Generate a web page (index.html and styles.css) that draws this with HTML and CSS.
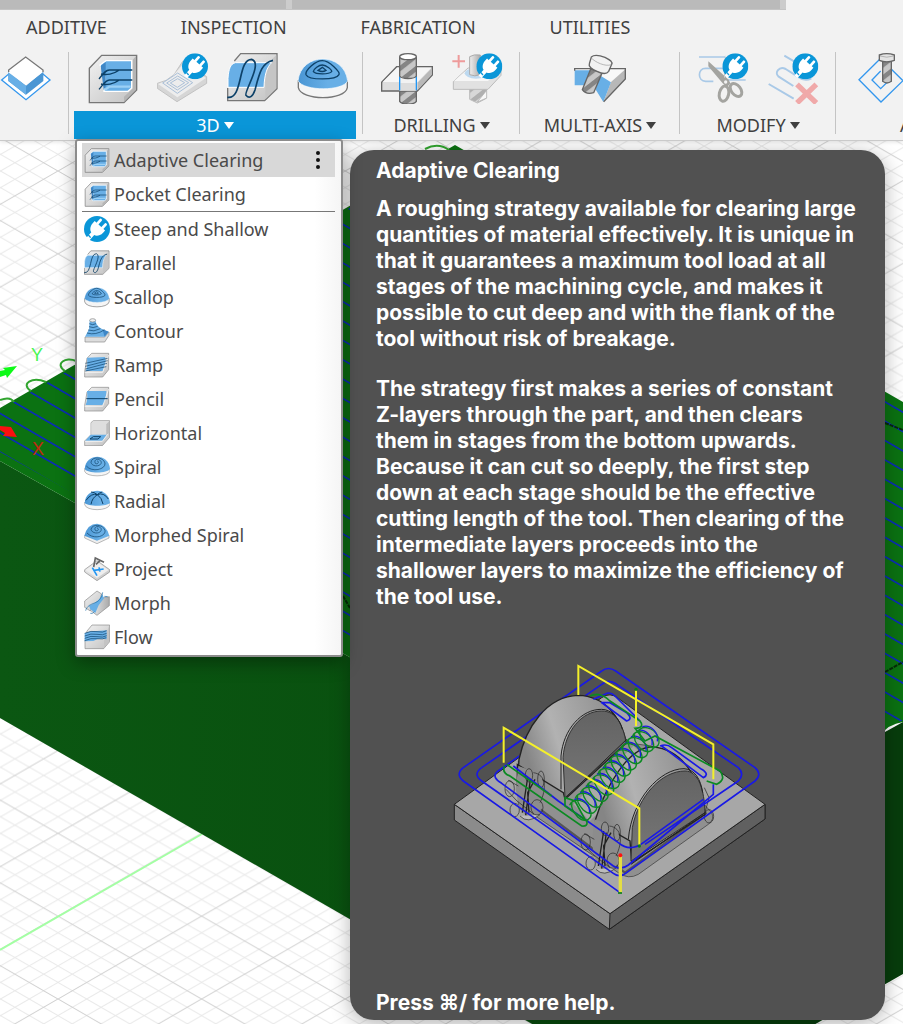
FILE: index.html
```html
<!DOCTYPE html>
<html lang="en">
<head>
<meta charset="utf-8">
<title>Manufacture workspace</title>
<link rel="stylesheet" href="styles.css">
</head>
<body>
<svg class="sprite" aria-hidden="true">
  <defs>
    <linearGradient id="metal" x1="0" y1="0" x2="1" y2="1"><stop offset="0" stop-color="#f2f2f2"/><stop offset="1" stop-color="#c2c2c2"/></linearGradient>
    <linearGradient id="shade" x1="0" y1="0" x2="1" y2="0"><stop offset="0" stop-color="#eee"/><stop offset="1" stop-color="#aaa"/></linearGradient>
    <linearGradient id="dome" x1="0" y1="0" x2="1" y2="0"><stop offset="0" stop-color="#4a96d4"/><stop offset=".6" stop-color="#68afe6"/><stop offset="1" stop-color="#68afe6"/></linearGradient>
    <symbol id="plug" viewBox="0 0 78 78">
      <circle cx="39" cy="39" r="39" fill="#0a96d8"/>
      <g transform="translate(39 39) rotate(42)" fill="#fff">
        <rect x="-14" y="-31" width="8" height="22" rx="3"/><rect x="6" y="-31" width="8" height="22" rx="3"/>
        <path d="M-21-13H21V-4C21 10 12 18 6 19V42H-6V19C-12 18-21 10-21-4Z"/>
      </g>
      <path d="M13 57l7 8" stroke="#0a96d8" stroke-width="4"/>
    </symbol>
    <symbol id="adaptive" viewBox="261 156 156 156">
      <path d="M268 205L305 166H410V270L372 308H268Z" fill="url(#metal)" stroke="#777" stroke-width="4"/>
      <path d="M408 168V269L372 306V290L398 266V180Z" fill="#b5b5b5"/>
      <path d="M300 195L318 182H395V264L384 274H312L316 230Z" fill="#68afe6" stroke="#fff" stroke-width="4"/>
      <path d="M302 198L317 186V260L311 270Z" fill="#3f87c6"/>
      <path d="M314 270L328 260H392" fill="none" stroke="#9bd0f5" stroke-width="7"/>
      <path d="M297 237C310 221 315 211 328 210H397M303 222C318 226 342 222 357 211M297 268C310 254 315 241 328 240H397M303 252C318 256 342 252 357 241" fill="none" stroke="#0d4168" stroke-width="4"/>
    </symbol>
    <symbol id="parallel" viewBox="681 156 156 156">
      <path d="M683 264V302H794L831 266V161H722L703 183" fill="url(#metal)" stroke="#777" stroke-width="4"/>
      <path d="M796 262C794 215 800 190 829 165V265L796 298Z" fill="#c5c5c5"/>
      <path d="M684 262V235C686 205 692 192 706 188H815C801 200 793 225 792 262Z" fill="#68afe6" stroke="#fff" stroke-width="3"/>
      <path d="M682 292C730 300 712 178 755 178C790 188 730 278 738 286C748 298 758 290 765 270C778 220 785 188 819 181" fill="none" stroke="#0d4168" stroke-width="5"/>
    </symbol>
    <symbol id="scallop" viewBox="888 156 156 156">
      <path d="M892 240V263C900 303 1032 303 1039 263V240" fill="#f5f5f5" stroke="#777" stroke-width="4"/>
      <path d="M891 243C900 155 1030 155 1040 243C1025 274 910 274 891 243Z" fill="url(#dome)" stroke="#fff" stroke-width="2"/>
      <path d="M964 182C986 182 1018 217 1014 224C1005 241 923 241 915 224C912 211 943 182 964 182ZM964 195C976 195 994 210 992 215C984 224 944 224 937 215C938 207 954 195 964 195ZM964 202L975 211Q964 218 951 211Z" fill="none" stroke="#0d4168" stroke-width="4"/>
    </symbol>
    <pattern id="threads" width="24" height="30" patternUnits="userSpaceOnUse" patternTransform="rotate(-38)"><rect width="24" height="30" fill="#c8c8c8"/><rect width="24" height="14" fill="#858585"/></pattern>
  </defs>
</svg>

<header class="ribbon">
  <div class="window-strip"><span></span><span></span></div>
  <nav class="tabs" aria-label="Workspace tabs">
    <a href="#additive">ADDITIVE</a><a href="#inspection">INSPECTION</a><a href="#fabrication">FABRICATION</a><a href="#utilities">UTILITIES</a>
  </nav>
  <div class="groups">
    <section class="group group-setup">
      <div class="tools"><button aria-label="Setup"><svg viewBox="0 156 156 156">
        <path d="M5 240L25 223L77 275L130 223L150 240L78 299Z" fill="#fff" stroke="#3497ee" stroke-width="4"/>
        <path d="M25 215V243L78 284L130 243V214L78 257Z" fill="#4a96d4"/><path d="M25 215V243L78 284V257Z" fill="#68afe6"/>
        <path d="M25 217V211L77 171L130 211V215L78 256Z" fill="#fff"/><path d="M26 216V210L77 171L129 210V216" fill="none" stroke="#777" stroke-width="4"/>
      </svg></button></div>
    </section>
    <section class="group group-3d">
      <div class="tools">
        <button aria-label="Adaptive clearing tool"><svg><use href="#adaptive"/></svg></button>
        <button aria-label="Steep and shallow tool"><svg viewBox="471 156 156 156">
          <path d="M472 250Q500 245 522 224L548 184L620 230V250L531 305L472 265Z" fill="#d6d6d6" stroke="#c2c2c2" stroke-width="3"/>
          <path d="M474 252Q505 244 525 220L552 190L618 234L532 292Z" fill="#ededed"/>
          <path d="M488 249L533 219L578 248L532 280ZM500 249L533 228L566 248L532 270ZM511 249L533 236L554 248L532 262Z" fill="none" stroke="#abc0d8" stroke-width="3"/>
          <use href="#plug" x="546" y="160" width="78" height="78"/>
        </svg></button>
        <button aria-label="Parallel tool"><svg><use href="#parallel"/></svg></button>
        <button aria-label="Scallop tool"><svg><use href="#scallop"/></svg></button>
      </div>
      <button class="group-label active" aria-haspopup="menu" aria-expanded="true">3D<i></i></button>
      <div class="menu" role="menu" aria-label="3D">
        <button class="item selected" role="menuitem"><svg><use href="#adaptive"/></svg>Adaptive Clearing<span class="more">
          <svg viewBox="0 0 6 20"><circle cx="3" cy="3" r="2"/><circle cx="3" cy="10" r="2"/><circle cx="3" cy="17" r="2"/></svg></span></button>
        <button class="item" role="menuitem"><svg><use href="#adaptive"/></svg>Pocket Clearing</button>
        <hr>
        <button class="item" role="menuitem"><svg><use href="#plug"/></svg>Steep and Shallow</button>
        <button class="item" role="menuitem"><svg><use href="#parallel"/></svg>Parallel</button>
        <button class="item" role="menuitem"><svg><use href="#scallop"/></svg>Scallop</button>
        <button class="item" role="menuitem"><svg viewBox="41 23 78 78">
          <path d="M44 80L103 80L116 65V75L103 95H44Z" fill="#ddd" stroke="#888" stroke-width="2"/>
          <path d="M44 79L56 57L58 30Q66 24 75 28C78 48 88 54 115 64L103 79Z" fill="#68afe6"/><path d="M103 79L115 64L96 57Z" fill="#3f87c6"/>
          <ellipse cx="67" cy="30" rx="9" ry="5" fill="#eee" stroke="#888" stroke-width="2"/>
          <path d="M57 40Q67 46 77 40M56 49Q68 55 82 48M53 59Q70 66 90 55M50 68Q76 76 103 58" fill="none" stroke="#0d4168" stroke-width="2"/>
        </svg>Contour</button>
        <button class="item" role="menuitem"><svg viewBox="41 121 78 78">
          <path d="M43 196V179L50 140L64 125H115V174L97 196Z" fill="url(#metal)" stroke="#888" stroke-width="2"/>
          <path d="M46 178Q53 168 50 138L104 136Q110 150 97 178Z" fill="#68afe6"/><path d="M43 182H97L115 130" fill="none" stroke="#fff" stroke-width="2"/>
          <path d="M45 155L112 140M45 164L112 147M45 172L110 155M45 178L108 165" stroke="#0d4168" stroke-width="2"/>
        </svg>Ramp</button>
        <button class="item" role="menuitem"><svg viewBox="41 223 78 78">
          <path d="M43 298V281L50 242L64 227H115V276L97 298Z" fill="url(#metal)" stroke="#888" stroke-width="2"/>
          <path d="M46 280Q53 264 50 238H108Q108 265 96 280Z" fill="#68afe6"/><path d="M43 284H97L115 232" fill="none" stroke="#fff" stroke-width="2"/><path d="M48 261H112" stroke="#0d4168" stroke-width="3"/>
        </svg>Pencil</button>
        <button class="item" role="menuitem"><svg viewBox="41 327 78 78">
          <path d="M43 404V390L62 371V335L69 329H118V379L96 404Z" fill="url(#metal)" stroke="#888" stroke-width="2"/>
          <path d="M63 337L69 330H117L108 340V371H63Z" fill="#dedede"/><path d="M108 340V371L117 365V331Z" fill="#bdbdbd"/>
          <path d="M45 389L61 371H109L96 389Z" fill="#68afe6"/><path d="M44 391H96L112 370" fill="none" stroke="#fff" stroke-width="2"/><path d="M59 384L69 377H91L83 384Z" fill="none" stroke="#0d4168" stroke-width="3"/>
        </svg>Horizontal</button>
        <button class="item" role="menuitem"><svg viewBox="41 430 78 78">
          <path d="M43 473V482C48 500 112 500 119 482V473" fill="#f5f5f5" stroke="#999" stroke-width="2"/><path d="M43 474C47 426 115 426 119 474C112 489 50 489 43 474Z" fill="url(#dome)"/>
          <path d="M48 466C64 486 107 477 104 457C98 437 63 437 62 455C66 472 98 467 92 452C85 441 69 446 75 458C83 463 88 453 80 450" fill="none" stroke="#0d4168" stroke-width="2"/>
        </svg>Spiral</button>
        <button class="item" role="menuitem"><svg viewBox="41 22 78 78">
          <path d="M43 64V72C48 92 112 92 119 72V64" fill="#f5f5f5" stroke="#999" stroke-width="2"/><path d="M43 66C47 18 115 18 119 66C112 78 50 78 43 66Z" fill="url(#dome)"/>
          <path d="M47 59Q64 36 81 42Q100 34 114 55M81 42Q86 36 96 34M81 42Q72 34 62 34M81 42Q65 52 62 71M81 42Q95 52 98 70" fill="none" stroke="#0d4168" stroke-width="3"/>
        </svg>Radial</button>
        <button class="item" role="menuitem"><svg viewBox="41 125 78 78">
          <path d="M43 165V173L80 190L116 173V165" fill="#eee" stroke="#999" stroke-width="2"/><path d="M42 166Q52 130 80 130Q108 132 117 166L80 181Z" fill="url(#dome)"/>
          <path d="M50 158C68 178 107 170 104 150C98 131 65 130 62 147C66 164 98 160 92 144C85 134 69 139 75 150C83 155 88 145 80 143" fill="none" stroke="#0d4168" stroke-width="2"/>
        </svg>Morphed Spiral</button>
        <button class="item" role="menuitem"><svg viewBox="41 225 78 78">
          <path d="M43 266L80 239L118 266V273L80 299L43 273Z" fill="url(#metal)" stroke="#888" stroke-width="2"/><path d="M46 267L80 243L115 267L80 291Z" fill="#eee"/>
          <path d="M70 258L75 231L101 244M77 250L89 239" fill="none" stroke="#666" stroke-width="5"/><path d="M66 260L80 284M71 268L100 264M86 259L89 272" fill="none" stroke="#2196f3" stroke-width="5"/>
        </svg>Project</button>
        <button class="item" role="menuitem"><svg viewBox="41 325 78 78">
          <path d="M43 358L80 328L94 337L88 356L60 388L43 377Z" fill="url(#metal)" stroke="#888" stroke-width="2"/>
          <path d="M60 386L91 350L117 345V372L80 401Z" fill="url(#shade)" stroke="#888" stroke-width="2"/><path d="M56 372Q85 363 96 338L101 350L85 371L75 394L60 383Z" fill="#68afe6"/>
          <path d="M46 387C55 356 90 375 97 332M60 395H66L72 390M102 344L112 345" fill="none" stroke="#176ba6" stroke-width="2"/>
        </svg>Morph</button>
        <button class="item" role="menuitem"><svg viewBox="41 425 78 78">
          <path d="M44 499V476L50 446L65 428H118V478L100 499Z" fill="url(#metal)" stroke="#888" stroke-width="2"/><path d="M101 475L116 431V478L101 497Z" fill="#c4c4c4"/>
          <path d="M43 477V453Q62 444 80 446L109 444V471Q86 466 69 476Z" fill="#68afe6"/><path d="M43 453Q62 444 80 448T109 445M43 461Q62 452 80 456T109 453M43 468Q62 459 80 463T109 460M43 475Q62 466 80 469T108 466" fill="none" stroke="#0d4168" stroke-width="2"/>
        </svg>Flow</button>
      </div>
    </section>
    <section class="group group-drilling">
      <div class="tools">
        <button aria-label="Drill"><svg viewBox="81 156 156 156">
          <path d="M137 268H187V304C181 315 143 315 137 304Z" fill="url(#threads)" stroke="#666" stroke-width="4"/>
          <path d="M83 247L128 200H235V225L190 273H83Z" fill="#ddd" stroke="#666" stroke-width="4"/><path d="M86 246L129 203H232L190 247Z" fill="#f6f6f6"/><path d="M191 248L233 205V224L191 270Z" fill="#b9b9b9"/>
          <path d="M137 229H187V272H137Z" fill="#f2f2f2"/><path d="M139 249H185V271H139Z" fill="#ddd"/><path d="M137 225V271M187 225V271" stroke="#2196f3" stroke-width="4"/>
          <path d="M137 170V228C143 238 181 238 187 228V170" fill="url(#threads)" stroke="#666" stroke-width="4"/><ellipse cx="162" cy="170" rx="25" ry="9" fill="#fff" stroke="#666" stroke-width="4"/>
        </svg></button>
        <button aria-label="Hole recognition"><svg viewBox="291 156 156 156">
          <path d="M314 165V203M295 184H333" stroke="#ee9b9b" stroke-width="6"/>
          <path d="M347 266H397V295L370 309L347 298Z" fill="url(#threads)" stroke="#999" stroke-width="3" opacity=".6"/><path d="M370 306L398 271V294Z" fill="#f8f8f8" stroke="#aaa" stroke-width="2"/>
          <path d="M298 245L342 204H441V226L402 268H298Z" fill="#e1e1e1" stroke="#bbb" stroke-width="3"/><path d="M300 243L342 206H440L402 243Z" fill="#f6f6f6"/><ellipse cx="366" cy="220" rx="34" ry="16" fill="#bdd9f0"/>
          <path d="M347 170V224Q362 231 379 224V165Q359 162 347 170Z" fill="url(#shade)" stroke="#aaa" stroke-width="3"/>
          <use href="#plug" x="367" y="160" width="78" height="78"/>
        </svg></button>
      </div>
      <button class="group-label">DRILLING<i></i></button>
    </section>
    <section class="group group-axis">
      <div class="tools"><button aria-label="Multi-axis contour"><svg viewBox="657 156 156 156">
        <path d="M659 206H811V238L744 305L715 256H659Z" fill="#f8f8f8"/><path d="M811 208V237L746 304L768 246Z" fill="#b8b8b8"/>
        <path d="M659 211H710L768 247L745 306L714 256H659Z" fill="#68afe6"/><path d="M659 212V206H811V237L746 305" fill="none" stroke="#666" stroke-width="4"/>
        <path d="M707 207L682 269Q693 285 716 278L742 217Z" fill="url(#threads)" stroke="#666" stroke-width="4"/>
        <path d="M709 171Q720 161 750 172Q775 184 770 193L761 214Q752 227 726 214Q699 202 703 191Z" fill="#f2f2f2" stroke="#666" stroke-width="4"/><path d="M709 174C720 186 750 201 769 194" fill="none" stroke="#999" stroke-width="2"/>
      </svg></button></div>
      <button class="group-label">MULTI-AXIS<i></i></button>
    </section>
    <section class="group group-modify">
      <div class="tools">
        <button aria-label="Trim toolpath"><svg viewBox="86 156 156 156">
          <path d="M92 171H170M170 205H112C87 205 87 244 112 244H135M174 240H232" fill="none" stroke="#a9c9e7" stroke-width="5"/>
          <path d="M120 184V199L163 250L176 262L186 250L181 239ZM170 165L178 226L168 233Z" fill="#a4a4a0"/>
          <g fill="#f2f2f2" stroke="#a4a4a0" stroke-width="9"><ellipse cx="167" cy="281" rx="14" ry="23" transform="rotate(12 167 281)"/><ellipse cx="203" cy="270" rx="14" ry="22" transform="rotate(-38 203 270)"/></g>
          <circle cx="172" cy="246" r="5" fill="#f2f2f2"/>
          <use href="#plug" x="162" y="160" width="78" height="78"/>
        </svg></button>
        <button aria-label="Delete passes"><svg viewBox="294 156 156 156">
          <path d="M346 167L402 200M427 235Q408 246 386 230L350 207C330 197 316 219 328 229L373 258M299 252L374 296" fill="none" stroke="#a9c9e7" stroke-width="6"/>
          <path d="M384 253L442 309M442 253L384 309" stroke="#f0a9a9" stroke-width="16"/>
          <use href="#plug" x="370" y="160" width="78" height="78"/>
        </svg></button>
      </div>
      <button class="group-label">MODIFY<i></i></button>
    </section>
    <section class="group group-actions">
      <div class="tools"><button aria-label="Post process"><svg viewBox="564 156 156 156">
        <path d="M630 177L567 239L633 306L699 242L655 199M632 213L606 240L632 266L656 242" fill="none" stroke="#3497ee" stroke-width="4"/>
        <path d="M638 184H664V244Q651 254 638 244Z" fill="url(#threads)" stroke="#666" stroke-width="4"/><path d="M628 165Q650 157 673 165V181Q650 190 628 181Z" fill="#e4e4e4" stroke="#666" stroke-width="4"/><path d="M630 168Q650 175 671 168" fill="none" stroke="#999" stroke-width="2"/>
      </svg></button></div>
      <button class="group-label">ACTIONS<i></i></button>
    </section>
  </div>
</header>

<main class="viewport">
  <svg class="scene" viewBox="0 141 903 883" preserveAspectRatio="xMidYMin slice" role="img" aria-label="Green stock model on a grid">
    <defs>
      <pattern id="grid" x="58" y="171" width="143.6" height="82.8" patternUnits="userSpaceOnUse" fill="none">
        <path stroke="#e9e9e9" d="M0 16.6L28.7 0M0 33.1L57.4 0M0 49.7L86.2 0M0 66.2L114.9 0M28.7 82.8L143.6 16.6M57.4 82.8L143.6 33.1M86.2 82.8L143.6 49.7M114.9 82.8L143.6 66.2M0 66.2L28.7 82.8M0 49.7L57.4 82.8M0 33.1L86.2 82.8M0 16.6L114.9 82.8M28.7 0L143.6 66.2M57.4 0L143.6 49.7M86.2 0L143.6 33.1M114.9 0L143.6 16.6"/>
        <path stroke="#cfcfcf" d="M0 0L143.6 82.8M143.6 0L0 82.8"/>
      </pattern>
      <pattern id="passes" y="335" width="60" height="19.35" patternUnits="userSpaceOnUse" patternTransform="skewY(30)"><path d="M0 1H60" stroke="#0a2db4" stroke-width="2"/></pattern>
      <linearGradient id="side"><stop offset="0" stop-color="#0b5712"/><stop offset="1" stop-color="#084e0e"/></linearGradient>
    </defs>
    <rect y="141" width="903" height="883" fill="#fff"/><rect y="141" width="903" height="883" fill="url(#grid)"/>
    <path d="M0 950L202 834" stroke="#a3ffa3" stroke-width="2"/>
    <path d="M0 461L560 775V1040L0 718Z" fill="url(#side)"/><path d="M560 760L885 732L903 722V974L560 1170Z" fill="#073d0c"/>
    <path d="M0 408L455 145L903 402V722Q888 724 880 736L560 920V775L0 461Z" fill="#0b7212"/>
    <path d="M0 410L455 147L903 404V720L560 915V765L0 452Z" fill="url(#passes)"/>
    <path d="M885 672L903 662M885 423L903 430M343 596L350 608" stroke="#052b08" stroke-width="2" stroke-dasharray="4 1"/>
    <g fill="none" stroke="#31a52f" stroke-width="2"><path d="M0 400Q10 396 14 402M31 391C20 384 32 376 46 382M65 371C54 364 66 356 76 361M425 149Q438 142 449 150"/></g>
    <path d="M0 371L5 370L3 368L17 366L7 378L6 375L0 377Z" fill="#0dfa17"/><path d="M0 426L11 427L17 437L3 436L5 433L0 430Z" fill="#fa1010"/>
    <text x="31" y="361" fill="#48f552">Y</text><text x="32" y="455" fill="#c02a10">X</text>
  </svg>

  <aside class="tooltip" role="tooltip">
    <h2>Adaptive Clearing</h2>
    <p>A roughing strategy available for clearing large quantities of material effectively. It is unique in that it guarantees a maximum tool load at all stages of the machining cycle, and makes it possible to cut deep and with the flank of the tool without risk of breakage.</p>
    <p>The strategy first makes a series of constant <br>Z-layers through the part, and then clears them in stages from the bottom upwards. Because it can cut so deeply, the first step down at each stage should be the effective cutting length of the tool. Then clearing of the intermediate layers proceeds into the shallower layers to maximize the efficiency of the tool use.</p>
    <svg class="figure" viewBox="26 0 1020 870" role="img" aria-label="Adaptive clearing toolpath over two domed parts">
      <defs>
        <linearGradient id="arch" x1="0" y1=".3" x2="1" y2="0"><stop offset="0" stop-color="#858585"/><stop offset=".3" stop-color="#b2b2b2"/><stop offset="1" stop-color="#868686"/></linearGradient>
        <linearGradient id="face" x1="0" y1="0" x2="0" y2="1"><stop offset="0" stop-color="#636363"/><stop offset="1" stop-color="#777"/></linearGradient>
        <g id="loop"><path d="M-30-10C-20-35 18-28 31 2C43 33 16 45-6 25C-22 8-27-5-23-17" stroke="#0b8a22"/><path d="M-16-28C10-36 34-9 29 16" stroke="#1a1ae0"/></g>
        <g id="foot"><path d="M240 360L232 430L245 490L262 508Q285 530 305 506L318 430L310 390L275 372Z" fill="#8c8c8c" stroke="none"/><path d="M252 500L268 395M262 508L276 400M290 400L268 440L272 500" stroke-width="4"/><path d="M245 510Q268 535 305 506" fill="#bbb"/><path d="M285 380C325 385 325 430 305 470"/><ellipse cx="272" cy="388" rx="11" ry="20"/><ellipse cx="308" cy="400" rx="10" ry="25"/><ellipse cx="214" cy="428" rx="14" ry="24"/><ellipse cx="229" cy="492" rx="14" ry="20"/><ellipse cx="296" cy="484" rx="18" ry="23"/><path d="M203 430L236 465L287 505M210 403L240 420"/></g>
      </defs>
      <path d="M48 475V522L513 850L980 519V475L515 803Z" fill="#8b8b8b" stroke="#222" stroke-width="3"/><path d="M515 803L980 475V519L513 850Z" fill="#606060" stroke="#222" stroke-width="3"/>
      <path d="M48 475L490 155Q515 137 540 157L980 475L515 803Z" fill="#a7a7a7" stroke="#222" stroke-width="3"/>
      <path d="M240 345L562 290L640 300L820 500Q830 520 810 535L600 685Q570 702 540 680L240 475Z" fill="#909090" stroke="#333" stroke-width="2"/>
      <path d="M250 448L560 680L805 500" fill="none" stroke="#555" stroke-width="6"/><path d="M430 500L610 325" stroke="#aaa" stroke-width="70"/>
      <path d="M75 365L490 75M130 365L490 115M175 378L300 290" fill="none" stroke="#1919e5" stroke-width="5"/>
      <path d="M237 430L242 340C262 245 325 150 420 148C500 150 545 210 565 290L380 460L375 440L237 355Z" fill="url(#arch)" stroke="#222" stroke-width="4"/>
      <path d="M380 455L374 335C380 255 430 195 490 195C535 195 555 240 563 290Z" fill="url(#face)" stroke="#333" stroke-width="3"/><path d="M368 430V330C375 250 430 189 490 190C520 190 545 220 552 250M382 455L565 280" fill="none" stroke="#222" stroke-width="3"/>
      <path d="M470 525C500 425 570 300 645 303C725 310 785 385 800 505L580 650L575 585Z" fill="url(#arch)" stroke="#222" stroke-width="4"/>
      <path d="M578 645L582 545C600 450 670 375 740 375C780 375 798 430 800 500Z" fill="url(#face)" stroke="#333" stroke-width="3"/><path d="M570 580C580 460 665 368 737 368C770 370 787 400 793 440M578 655L800 500" fill="none" stroke="#222" stroke-width="3"/>
      <g fill="none" stroke="#222" stroke-width="2"><use href="#foot"/><use href="#foot" x="228" y="160"/><ellipse cx="812" cy="511" rx="14" ry="20"/><path d="M798 425L812 455L800 500"/></g>
      <g fill="none" stroke="#1919e5" stroke-width="5" stroke-linejoin="round">
        <path d="M545 740L75 405Q50 385 75 365M490 75Q510 60 532 75L950 365Q973 385 950 405L565 680Q545 697 525 682L130 405Q102 385 130 365M490 115Q510 98 532 113L900 365Q920 385 900 405L620 595"/>
        <path d="M175 378Q160 395 190 412L525 660Q548 674 570 657L825 445V415M225 360L360 465L540 590Q575 620 615 590L795 460"/>
        <path d="M465 160L500 145Q515 135 530 150L605 225M490 170L565 225Q585 220 565 200L515 170ZM670 300L795 395Q815 385 790 370L700 305Q685 292 665 300"/>
      </g>
      <g fill="none" stroke-width="4">
        <use href="#loop" x="424" y="488"/><use href="#loop" x="441" y="467"/><use href="#loop" x="458" y="449"/><use href="#loop" x="475" y="431"/><use href="#loop" x="492" y="412"/><use href="#loop" x="509" y="393"/><use href="#loop" x="526" y="374"/><use href="#loop" x="543" y="355"/><use href="#loop" x="560" y="337"/><use href="#loop" x="577" y="318"/><use href="#loop" x="594" y="300"/><use href="#loop" x="612" y="282"/><use href="#loop" x="628" y="270"/>
        <path d="M455 150Q485 135 515 165L605 225Q620 245 590 247L620 285L650 270L845 375Q865 400 835 415L805 405M198 360Q190 380 215 390L430 540Q450 542 445 525L380 480V455L410 465L440 520M205 355L340 450" stroke="#0b8a22" stroke-width="5"/>
      </g>
      <g fill="none" stroke="#f4f02a" stroke-width="6"><path d="M420 147V60L825 295V400M196 350V245L603 487V600M593 130V240"/><path d="M546 630V740" stroke="#e4de43" stroke-width="10"/></g>
      <circle cx="593" cy="130" r="5" fill="#08801b"/><circle cx="546" cy="628" r="6" fill="#f11"/><circle cx="603" cy="600" r="5" fill="#08801b"/><path d="M539 741H551" stroke="#08801b" stroke-width="5"/>
    </svg>
    <footer>Press <kbd>⌘/</kbd> for more help.</footer>
  </aside>
</main>
</body>
</html>
```
FILE: styles.css
```css
* { box-sizing: border-box; }
body {
  margin: 0;
  height: 100vh;
  display: flex;
  flex-direction: column;
  overflow: hidden;
  font-family: "Noto Sans", "Open Sans", sans-serif;
  font-size: 18px;
  color: #404040;
}
button {
  font: inherit;
  color: inherit;
  border: 0;
  padding: 0;
  background: none;
}
svg { display: block; }
.sprite { position: absolute; width: 0; height: 0; }

.ribbon {
  position: relative;
  z-index: 1;
  flex: none;
  background: #f2f2f2;
  border-bottom: 1px solid #cacaca;
  box-shadow: 0 1px 4px rgba(0, 0, 0, .12);
}
.window-strip {
  display: flex;
  gap: 6px;
  width: 87%;
  height: 10px;
  background: #ccc;
  border-bottom: 1px solid #c4c4c4;
}
.window-strip span { flex: 1; background: #bababa; }
.window-strip span:first-child { flex: 0 0 286px; }
.window-strip span:last-child { margin-right: 6px; }
.tabs {
  display: flex;
  gap: 74px;
  padding: 4px 26px 0;
  height: 42px;
  line-height: 26px;
}
.tabs a { color: #404040; text-decoration: none; }

.groups { display: flex; height: 88px; }
.group {
  position: relative;
  flex: none;
  display: flex;
  flex-direction: column;
  align-items: center;
  gap: 7px;
}
.group::after {
  content: "";
  position: absolute;
  right: 0;
  top: 0;
  width: 1px;
  height: 82px;
  background: #c4c4c4;
}
.group-setup { width: 69px; align-items: flex-start; }
.group-3d { width: 294px; padding-left: 5px; align-items: flex-start; }
.group-3d .tools { padding-left: 13px; }
.group-drilling { width: 157px; }
.group-axis { width: 160px; }
.group-modify { width: 156px; }
.group-actions {
  flex: 1;
  min-width: 0;
  overflow: hidden;
  padding-left: 22px;
  align-items: flex-start;
}
.group-actions::after { content: none; }
.group-actions .group-label { padding-left: 42px; }
.tools { display: flex; gap: 18px; }
.tools button, .tools svg { width: 52px; height: 52px; }
.group-label {
  display: flex;
  align-items: center;
  justify-content: center;
  gap: 4px;
  height: 28px;
  line-height: 28px;
}
.group-label i {
  border: 5px solid transparent;
  border-top: 7px solid currentColor;
  border-bottom: 0;
}
.group-label.active { width: 282px; background: #0a96d8; color: #fff; }

.menu {
  position: absolute;
  left: 6px;
  top: 87px;
  width: 268px;
  padding: 2px 6px 1px 5px;
  background: linear-gradient(to right, #fff 90%, #f5f5f5);
  border: 2px solid #8c8c8c;
  border-radius: 3px;
  box-shadow: 0 6px 18px rgba(0, 0, 0, .35);
  color: #4a4a4a;
}
.item {
  display: flex;
  align-items: center;
  gap: 4px;
  width: 100%;
  height: 34px;
  padding: 0 14px 0 2px;
  text-align: left;
}
.item > svg { width: 26px; height: 26px; }
.item.selected { background: #d8d8d8; }
.more { margin-left: auto; }
.more svg { width: 6px; height: 20px; fill: #111; }
.menu hr { margin: 0; border: 0; border-top: 1px solid #777; }

.viewport { position: relative; flex: 1; min-height: 0; }
.scene { width: 100%; height: 100%; }
.scene text { font: 18px "Liberation Sans", sans-serif; }

.tooltip {
  position: absolute;
  left: 350px;
  right: 18px;
  top: 9px;
  bottom: 4px;
  display: flex;
  flex-direction: column;
  padding: 8px 28px 4px 26px;
  border-radius: 24px;
  background: #515151;
  box-shadow: 0 4px 20px rgba(0, 0, 0, .3);
  color: #fff;
  font: 700 21px/26px Inter, sans-serif;
}
.tooltip h2 { margin: 0 0 12px; font: inherit; }
.tooltip p { margin: 0 0 24px; }
.figure { width: 340px; height: 290px; margin: 12px auto 0; flex: none; }
.tooltip footer { margin-top: auto; }
.tooltip kbd { font: inherit; }
```
